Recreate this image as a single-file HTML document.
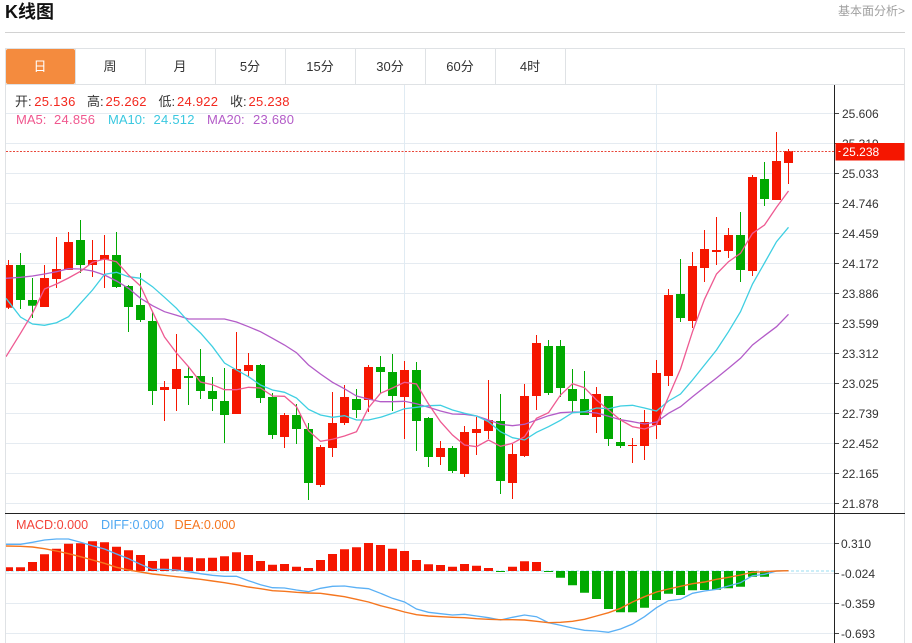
<!DOCTYPE html>
<html><head><meta charset="utf-8"><title>K线图</title>
<style>
html,body{margin:0;padding:0;background:#fff;overflow:hidden}
svg{display:block;font-family:"Liberation Sans","Noto Sans CJK SC",sans-serif}
</style></head><body>
<svg xmlns="http://www.w3.org/2000/svg" width="912" height="643" viewBox="0 0 912 643">
<defs><clipPath id="c"><rect x="6" y="85" width="828" height="558"/></clipPath></defs>
<text x="5" y="18" font-size="18" font-weight="700" fill="#111">K线图</text>
<text x="838" y="15" font-size="12" fill="#a0a0a0">基本面分析&gt;</text>
<path d="M5 32.5H905" stroke="#d2d2d2" fill="none"/>
<path d="M5 48.5H905M5.5 48V643M904.5 48V643M5 84.5H905" stroke="#dfe2e5" fill="none"/>
<rect x="6" y="49" width="69" height="35" rx="2" fill="#f48b3e"/>
<path d="M75.5 49V84M145.5 49V84M215.5 49V84M285.5 49V84M355.5 49V84M425.5 49V84M495.5 49V84M565.5 49V84" stroke="#dfe2e5" fill="none"/>
<g font-size="13" fill="#333" text-anchor="middle">
<text x="40" y="71" fill="#fff">日</text><text x="110" y="71">周</text><text x="180" y="71">月</text><text x="250" y="71">5分</text><text x="320" y="71">15分</text><text x="390" y="71">30分</text><text x="460" y="71">60分</text><text x="530" y="71">4时</text>
</g>
<path d="M6 113.5H834M6 143.5H834M6 173.5H834M6 203.5H834M6 233.5H834M6 263.5H834M6 293.5H834M6 323.5H834M6 353.5H834M6 383.5H834M6 413.5H834M6 443.5H834M6 473.5H834M6 503.5H834M6 543.5H834M6 573.5H834M6 603.5H834M6 633.5H834" stroke="#e5ebf1" fill="none"/>
<path d="M404.5 85V643M656.5 85V643" stroke="#e0ebf3" fill="none"/>
<g clip-path="url(#c)" fill="none">
<path stroke="#f51600" d="M8.5 260V309M44.5 265V307M56.5 237V288M68.5 232V270M92.5 240V277M104.5 235V288M164.5 381V421M176.5 334V411M236.5 332V414M248.5 353V377M284.5 413V448M320.5 445V487M332.5 392V457M344.5 385V425M368.5 365V412M404.5 361V439M440.5 441V465M464.5 426V477M476.5 417V455M488.5 380V439M512.5 444V499M524.5 384V457M536.5 335V410M596.5 387V433M632.5 438V463M644.5 410V460M656.5 360V439M668.5 289V386M692.5 252V328M704.5 230V282M716.5 217V265M728.5 228V258M752.5 175V276M776.5 132V200M788.5 149V184"/>
<path stroke="#f51600" stroke-width="9" d="M8.5 265V307.7M44.5 278V307M56.5 269V279M68.5 242V270M92.5 260V265M104.5 255V260M164.5 387V390M176.5 369V389M236.5 369V414M248.5 365V371M284.5 415V437M320.5 447V485M332.5 423V448M344.5 397V423M368.5 367V400M404.5 370V397M440.5 448V457M464.5 432V474M476.5 429V433M488.5 420V431M512.5 454V483M524.5 396V456M536.5 343V396M596.5 394V417M632.5 445V446M644.5 422V446M656.5 373V425M668.5 295V376M692.5 266V321M704.5 249V268M716.5 250V252M728.5 235V251M752.5 177V271M776.5 161V200M788.5 151V163"/>
<path stroke="#01a901" d="M20.5 253V309M32.5 278V318M80.5 220V273M116.5 232V288M128.5 285V332M140.5 273V322M152.5 312V405M188.5 366V405M200.5 349V399M212.5 377V411M224.5 368V443M260.5 364V403M272.5 393V439M296.5 404V444M308.5 423V500M356.5 389V418M380.5 356V393M392.5 354V411M416.5 362V451M428.5 417V467M452.5 446V473M500.5 394V494M548.5 340V395M560.5 340V397M572.5 369V413M584.5 371V415M608.5 396V446M620.5 418V448M680.5 259V322M740.5 212V282M764.5 162V206"/>
<path stroke="#01a901" stroke-width="9" d="M20.5 265V300M32.5 300V305.7M80.5 240V265M116.5 255V287M128.5 286V307M140.5 305V320M152.5 321V391M188.5 376V378M200.5 376V391M212.5 391V399M224.5 401V415M260.5 365V398M272.5 397V435M296.5 415V429M308.5 429V483M356.5 399V410M380.5 367V372M392.5 372V396M416.5 370V421M428.5 418V457M452.5 448V471M500.5 421V481M548.5 346V393M560.5 346V388M572.5 389V401M584.5 399V415M608.5 396V439M620.5 442V446M680.5 294V318M740.5 235V270M764.5 179V199"/>
<polyline stroke="#b35cc8" stroke-width="1.3" points="6,278.3 20.5,277.3 32.5,276 44.5,274 56.5,271.7 68.5,268.7 80.5,269 92.5,271 104.5,275 116.5,281 128.5,288.3 140.5,298.3 152.5,305.7 164.5,311.7 176.5,315.3 188.5,319 200.5,319 212.5,319 224.5,319 236.5,322 248.5,326.7 260.5,331.7 272.5,338.3 284.5,345 296.5,352.7 308.5,365 320.5,374 332.5,382.3 344.5,388.8 356.5,396 368.5,399 380.5,401.7 392.5,401.7 404.5,401.3 416.5,403.7 428.5,407.3 440.5,411 452.5,414 464.5,414.3 476.5,416 488.5,420 500.5,424.3 512.5,425.7 524.5,424.3 536.5,420 548.5,415.7 560.5,412.7 572.5,412 584.5,412 596.5,413 608.5,416.3 620.5,419.7 632.5,421.7 644.5,424 656.5,422 668.5,413.3 680.5,406.7 692.5,396.7 704.5,387.3 716.5,378 728.5,368.3 740.5,358.3 752.5,345 764.5,335.7 776.5,326.7 788.5,314.3"/>
<polyline stroke="#3fcfe2" stroke-width="1.3" points="6,298.3 20.5,317 32.5,324 44.5,325.3 56.5,322.7 68.5,316.7 80.5,303.3 92.5,290 104.5,274.3 116.5,272.3 128.5,276.7 140.5,278.3 152.5,286.7 164.5,297.3 176.5,308.3 188.5,321.7 200.5,333 212.5,346.7 224.5,363 236.5,370 248.5,376.7 260.5,385 272.5,390 284.5,392.3 296.5,398 308.5,409.3 320.5,415 332.5,417.3 344.5,415.7 356.5,420 368.5,420 380.5,417.3 392.5,413.3 404.5,408.7 416.5,407.3 428.5,405.7 440.5,405.3 452.5,410 464.5,413.3 476.5,416 488.5,421.7 500.5,431.7 512.5,437.7 524.5,440 536.5,432.3 548.5,426.7 560.5,420.3 572.5,412.7 584.5,411.7 596.5,408 608.5,408.7 620.5,406 632.5,405.3 644.5,408 656.5,411 668.5,401 680.5,394 692.5,380 704.5,365 716.5,350 728.5,331.7 740.5,311.7 752.5,284 764.5,263 776.5,241.7 788.5,227.3"/>
<polyline stroke="#ee5a92" stroke-width="1.3" points="6,356.7 20.5,333.3 32.5,313.3 44.5,289 56.5,284 68.5,278 80.5,271.3 92.5,262.3 104.5,259 116.5,261.7 128.5,275 140.5,286 152.5,311.7 164.5,337 176.5,353 188.5,366.7 200.5,382 212.5,384.7 224.5,389.7 236.5,389.7 248.5,387.3 260.5,388 272.5,396 284.5,396.3 296.5,406.7 308.5,430.7 320.5,441.3 332.5,439.3 344.5,436 356.5,431.7 368.5,407.7 380.5,393.3 392.5,388 404.5,382.3 416.5,384 428.5,404 440.5,421.7 452.5,435 464.5,445 476.5,446.7 488.5,440 500.5,446.3 512.5,443.3 524.5,436.7 536.5,418.3 548.5,412.7 560.5,395 572.5,383.7 584.5,387.7 596.5,400 608.5,410 620.5,420 632.5,426.7 644.5,429 656.5,424.7 668.5,396.7 680.5,369 692.5,331.7 704.5,299.3 716.5,274 728.5,261.7 740.5,253.3 752.5,233.3 764.5,225 776.5,207.3 788.5,191"/>
<path stroke="#e8473a" stroke-dasharray="2 1.5" d="M6 151.5H834"/>
<path stroke="#9adcf0" stroke-dasharray="3 2" d="M6 571H834"/>
<path stroke="#f51600" stroke-width="9" d="M8.5 567.3V571M20.5 567.3V571M32.5 562V571M44.5 554.3V571M56.5 548.7V571M68.5 543.7V571M80.5 543.3V571M92.5 541.3V571M104.5 542.3V571M116.5 546.7V571M128.5 550.3V571M140.5 555V571M152.5 561V571M164.5 558.7V571M176.5 556.7V571M188.5 557.3V571M200.5 558.3V571M212.5 557.7V571M224.5 556.3V571M236.5 552.3V571M248.5 555V571M260.5 561V571M272.5 564.7V571M284.5 564V571M296.5 566.7V571M308.5 568V571M320.5 560V571M332.5 554V571M344.5 549.3V571M356.5 547.3V571M368.5 543V571M380.5 545V571M392.5 548.7V571M404.5 551V571M416.5 560V571M428.5 564.3V571M440.5 565V571M452.5 566.7V571M464.5 564V571M476.5 565.7V571M488.5 568V571M512.5 566.7V571M524.5 561.3V571M536.5 562V571"/>
<path stroke="#01a901" stroke-width="9" d="M500.5 571V572M548.5 571V572M560.5 571V577.7M572.5 571V585.3M584.5 571V592.7M596.5 571V599M608.5 571V609M620.5 571V612.3M632.5 571V612.3M644.5 571V607.7M656.5 571V600M668.5 571V593.7M680.5 571V595M692.5 571V590.3M704.5 571V590M716.5 571V589.7M728.5 571V588.3M740.5 571V586.7M752.5 571V576.7M764.5 571V576.7"/>
<polyline stroke="#5ab0f5" stroke-width="1.3" points="6,544.3 20.5,544.3 32.5,542.3 44.5,540 56.5,539 68.5,539 80.5,542.3 92.5,545.7 104.5,549 116.5,554 128.5,558.7 140.5,564.3 152.5,569.3 164.5,569.3 176.5,570 188.5,571.7 200.5,573.7 212.5,575.3 224.5,576.3 236.5,576.3 248.5,580.7 260.5,584.7 272.5,587.7 284.5,588 296.5,590 308.5,591.7 320.5,588.3 332.5,586.3 344.5,586 356.5,587.7 368.5,588.7 380.5,593.3 392.5,598.3 404.5,602 416.5,609 428.5,612.3 440.5,613.7 452.5,615 464.5,614.3 476.5,616 488.5,617.7 500.5,620 512.5,617.3 524.5,615 536.5,616.7 548.5,622.7 560.5,625.3 572.5,628 584.5,630.3 596.5,631 608.5,632.3 620.5,629 632.5,624 644.5,616.7 656.5,607.7 668.5,600.7 680.5,599.3 692.5,593.3 704.5,591 716.5,589.3 728.5,586 740.5,582.7 752.5,575.7 764.5,574.3 776.5,571 788.5,570.7"/>
<polyline stroke="#f5761f" stroke-width="1.4" points="6,546 20.5,546.3 32.5,547 44.5,548.7 56.5,551 68.5,553.7 80.5,556.7 92.5,560 104.5,563.3 116.5,567.3 128.5,570 140.5,572 152.5,574 164.5,575.3 176.5,576.7 188.5,578 200.5,579.3 212.5,581 224.5,582.7 236.5,584.7 248.5,587 260.5,588.7 272.5,590.7 284.5,591.3 296.5,592.3 308.5,593 320.5,593.3 332.5,595 344.5,596.7 356.5,599.3 368.5,602 380.5,605.7 392.5,608.7 404.5,612 416.5,614.7 428.5,616 440.5,616.7 452.5,617.3 464.5,617.7 476.5,618.7 488.5,619.3 500.5,619.7 512.5,619.7 524.5,620 536.5,621.3 548.5,622.7 560.5,622.3 572.5,621.3 584.5,619.3 596.5,616 608.5,612.7 620.5,608.3 632.5,602 644.5,596.7 656.5,592 668.5,589 680.5,586.3 692.5,583.7 704.5,582 716.5,579.3 728.5,577.3 740.5,575 752.5,572.3 764.5,571.7 776.5,571 788.5,570.7"/>
</g>
<path d="M834.5 85V643M5 513.5H905" stroke="#222" fill="none"/>
<path d="M835 113.5H839M835 143.5H839M835 173.5H839M835 203.5H839M835 233.5H839M835 263.5H839M835 293.5H839M835 323.5H839M835 353.5H839M835 383.5H839M835 413.5H839M835 443.5H839M835 473.5H839M835 503.5H839M835 543.5H839M835 573.5H839M835 603.5H839M835 633.5H839" stroke="#444" fill="none"/>
<g font-size="12" fill="#333">
<text x="842" y="118">25.606</text><text x="842" y="148">25.319</text><text x="842" y="178">25.033</text><text x="842" y="208">24.746</text><text x="842" y="238">24.459</text><text x="842" y="268">24.172</text><text x="842" y="298">23.886</text><text x="842" y="328">23.599</text><text x="842" y="358">23.312</text><text x="842" y="388">23.025</text><text x="842" y="418">22.739</text><text x="842" y="448">22.452</text><text x="842" y="478">22.165</text><text x="842" y="508">21.878</text>
<text x="841" y="548">0.310</text><text x="841" y="578">-0.024</text><text x="841" y="608">-0.359</text><text x="841" y="638">-0.693</text>
</g>
<rect x="835.5" y="143" width="69" height="17.5" fill="#f51600"/>
<path d="M838.500 151.500H840.500" stroke="#fff"/>
<text x="842.500" y="156" font-size="12" fill="#fff">25.238</text>
<g font-size="13">
<g fill="#333"><text x="15" y="106">开:</text><text x="87" y="106">高:</text><text x="158.5" y="106">低:</text><text x="230" y="106">收:</text></g>
<g fill="#f3281e"><text x="34.3" y="106" textLength="41">25.136</text><text x="105.5" y="106" textLength="41">25.262</text><text x="177" y="106" textLength="41">24.922</text><text x="248.5" y="106" textLength="41">25.238</text></g>
<g fill="#f0588f"><text x="16" y="124">MA5:</text><text x="54" y="124" textLength="41">24.856</text></g>
<g fill="#3ac8e0"><text x="108" y="124">MA10:</text><text x="153.5" y="124" textLength="41">24.512</text></g>
<g fill="#b35cc8"><text x="207" y="124">MA20:</text><text x="253" y="124" textLength="41">23.680</text></g>
</g>
<g font-size="12.6">
<text x="16" y="529" fill="#f3433a">MACD:0.000</text>
<text x="101" y="529" fill="#4fa8f2">DIFF:0.000</text>
<text x="174.500" y="529" fill="#f5761f">DEA:0.000</text>
</g>
</svg>
</body></html>
